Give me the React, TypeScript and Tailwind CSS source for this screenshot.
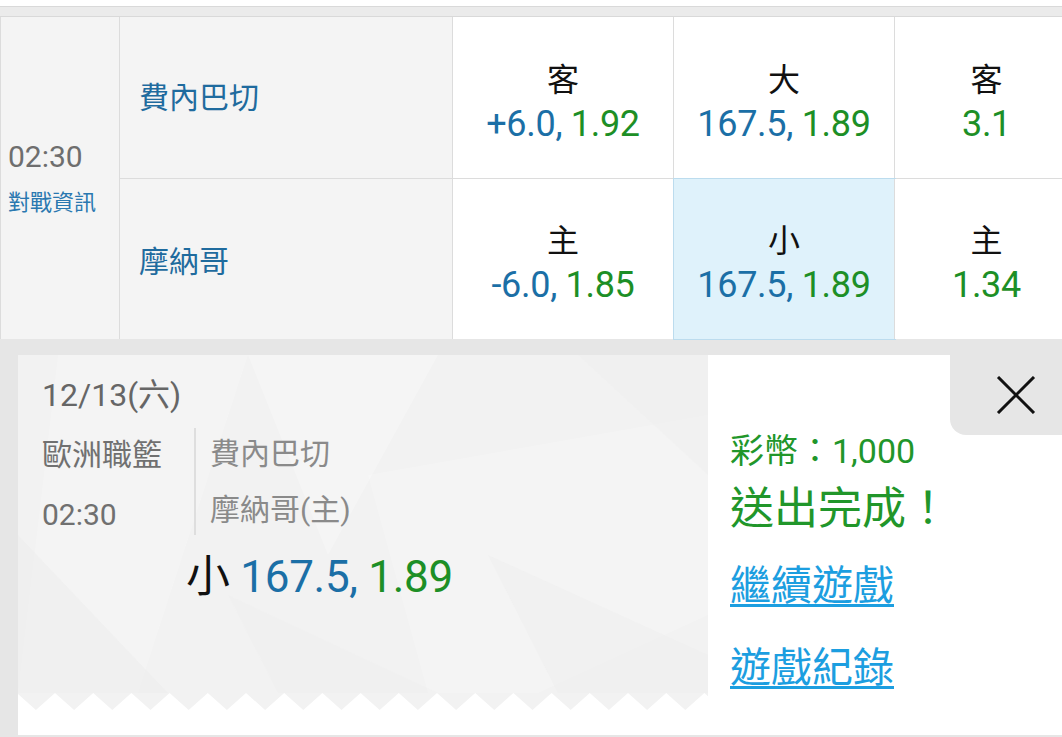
import React from "react";

const FONT = { fontFamily: "Roboto, 'Noto Sans CJK TC', 'Noto Sans', sans-serif" };

function OddsCell({
  label,
  a,
  b,
  selected,
  last,
}: {
  label: string;
  a?: string;
  b: string;
  selected?: boolean;
  last?: boolean;
}) {
  return (
    <div
      className={
        "flex flex-col items-center justify-center pt-[8px] " +
        (last ? "w-[167px] pl-[16px] " : "w-[221px] border-r border-[#dcdcdc] ") +
        (selected ? "bg-[#dff2fb] outline outline-1 outline-[#bcdcee] " : "bg-white ")
      }
    >
      <div className="text-[32px] leading-[44px] text-[#111]">{label}</div>
      <div className="text-[36px] leading-[44px] whitespace-pre tracking-[-0.3px]">
        {a ? <span className="text-[#1b6fa6]">{a}, </span> : null}
        <span className="text-[#1d8f26]">{b}</span>
      </div>
    </div>
  );
}

function Zigzag() {
  const pts: string[] = ["0,0", "690,0", "690,17"];
  const period = 38.2;
  const first = 37;
  const zz: [number, number][] = [];
  for (let i = -2; i < 20; i++) {
    const px = first + period * i;
    zz.push([px, 0]);
    zz.push([px + period / 2, 17]);
  }
  const rev = zz.filter(([x]) => x > -40 && x < 730).reverse();
  rev.forEach(([x, y]) => pts.push(`${x.toFixed(1)},${y}`));
  pts.push("0,17");
  return (
    <svg width="690" height="17" className="block overflow-hidden">
      <polygon points={pts.join(" ")} fill="#f2f2f2" />
    </svg>
  );
}

function Pattern() {
  return (
    <svg
      width="690"
      height="338"
      className="absolute left-0 top-0 pointer-events-none"
    >
      <polygon points="40,0 230,0 120,338 0,338" fill="#ffffff" opacity="0.18" />
      <polygon points="230,0 420,0 310,200" fill="#ffffff" opacity="0.25" />
      <polygon points="350,120 690,60 690,260 520,338 410,338" fill="#ffffff" opacity="0.2" />
      <polygon points="0,180 150,338 0,338" fill="#ececec" opacity="0.4" />
      <polygon points="210,240 420,338 260,338" fill="#ededed" opacity="0.35" />
      <polygon points="560,0 690,0 690,120" fill="#ededed" opacity="0.4" />
      <polygon points="470,200 690,300 690,338 540,338" fill="#eeeeee" opacity="0.45" />
    </svg>
  );
}

export default function App() {
  return (
    <div className="w-[1062px] h-[737px] overflow-hidden bg-white" style={FONT}>
      <div className="h-[6px] bg-white" />
      <div className="h-[11px] bg-[#ebebeb] border-y border-[#d9d9d9]" />

      {/* match table */}
      <div className="flex h-[322px] bg-[#f4f4f4]">
        <div className="w-[120px] border-r border-l border-[#dcdcdc] flex flex-col justify-center pl-[7px]">
          <div className="text-[30px] leading-[36px] text-[#6e6e6e]">02:30</div>
          <div className="mt-[14px] text-[22px] leading-[28px] text-[#2a78b0]">對戰資訊</div>
        </div>
        <div className="flex flex-col flex-1">
          <div className="flex h-[162px] border-b border-[#dcdcdc]">
            <div className="w-[333px] border-r border-[#dcdcdc] flex items-center pl-[19px] text-[30px] text-[#1f6b9e]">
              費內巴切
            </div>
            <OddsCell label="客" a="+6.0" b="1.92" />
            <OddsCell label="大" a="167.5" b="1.89" />
            <OddsCell label="客" b="3.1" last />
          </div>
          <div className="flex h-[160px]">
            <div className="w-[333px] border-r border-[#dcdcdc] flex items-center pl-[19px] pt-[4px] text-[30px] text-[#1f6b9e]">
              摩納哥
            </div>
            <OddsCell label="主" a="-6.0" b="1.85" />
            <OddsCell label="小" a="167.5" b="1.89" selected />
            <OddsCell label="主" b="1.34" last />
          </div>
        </div>
      </div>

      <div className="h-[16px] bg-[#e6e6e6]" />

      {/* bet ticket */}
      <div className="flex h-[380px]">
        <div className="w-[18px] bg-[#e6e6e6]" />
        <div className="w-[690px] bg-white flex flex-col">
          <div className="relative h-[338px] bg-[#f2f2f2] pl-[24px] pt-[22px]">
            <Pattern />
            <div className="relative">
              <div className="text-[32px] leading-[36px] text-[#666]">12/13(六)</div>
              <div className="flex mt-[15px]">
                <div className="w-[152px] flex flex-col pt-[7px] gap-[20px] text-[30px] text-[#707070]">
                  <div className="leading-[40px]">歐洲職籃</div>
                  <div className="leading-[40px]">02:30</div>
                </div>
                <div className="border-l-2 border-[#dedede] pl-[14px] pt-[6px] flex flex-col gap-[16px] text-[30px] text-[#8a8a8a]">
                  <div className="leading-[40px]">費內巴切</div>
                  <div className="leading-[40px]">摩納哥(主)</div>
                </div>
              </div>
              <div className="mt-[17px] pl-[144px] text-[44px] leading-[50px] whitespace-pre tracking-[-0.3px]">
                <span className="text-[#111]">小 </span>
                <span className="text-[#1b6fa6]">167.5, </span>
                <span className="text-[#1d8f26]">1.89</span>
              </div>
            </div>
          </div>
          <Zigzag />
        </div>
        <div className="relative flex-1 bg-white pl-[22px] pt-[74px]">
          <div className="absolute top-0 right-0 w-[112px] h-[80px] bg-[#e6e6e6] rounded-bl-[16px] flex items-center justify-center pl-[20px]">
            <svg width="40" height="38" viewBox="0 0 40 38">
              <path d="M2 1 L38 37 M38 1 L2 37" stroke="#111" strokeWidth="3" fill="none" />
            </svg>
          </div>
          <div className="text-[34px] leading-[44px] text-[#21962a]">彩幣：1,000</div>
          <div className="mt-[10px] text-[44px] leading-[52px] text-[#21962a]">送出完成！</div>
          <div className="mt-[26px] text-[41px] leading-[50px]">
            <a className="text-[#1c9ee0] underline decoration-[3px] underline-offset-[4px]">繼續遊戲</a>
          </div>
          <div className="mt-[32px] text-[41px] leading-[50px]">
            <a className="text-[#1c9ee0] underline decoration-[3px] underline-offset-[4px]">遊戲紀錄</a>
          </div>
        </div>
      </div>
      <div className="h-[2px] bg-[#e6e6e6]" />
    </div>
  );
}
